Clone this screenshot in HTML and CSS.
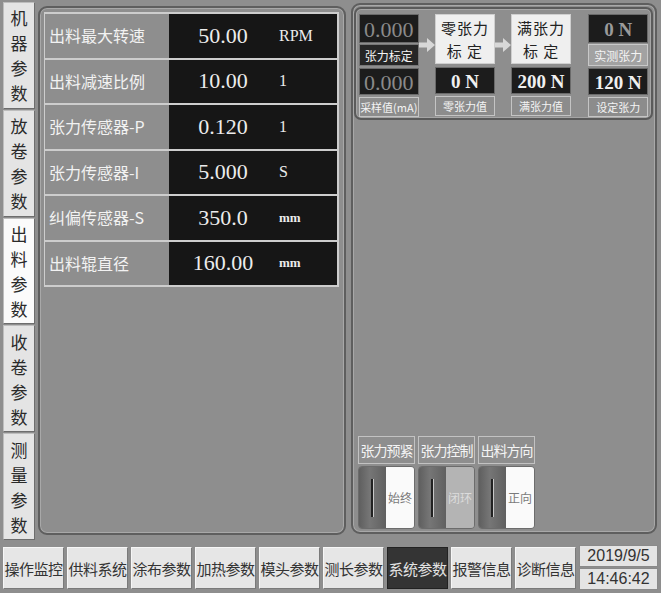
FILE: index.html
```html
<!DOCTYPE html>
<html>
<head>
<meta charset="utf-8">
<link rel="stylesheet" href="styles.css">
</head>
<body>
<div class="screen">
  <div class="main">
    <div class="tabs">
      <div class="tab"><span>机</span><span>器</span><span>参</span><span>数</span></div>
      <div class="tab"><span>放</span><span>卷</span><span>参</span><span>数</span></div>
      <div class="tab active"><span>出</span><span>料</span><span>参</span><span>数</span></div>
      <div class="tab"><span>收</span><span>卷</span><span>参</span><span>数</span></div>
      <div class="tab"><span>测</span><span>量</span><span>参</span><span>数</span></div>
    </div>

    <div class="panel left-panel">
      <div class="ptable">
        <div class="prow"><div class="plabel">出料最大转速</div><div class="pval"><span class="num">50.00</span><span class="unit">RPM</span></div></div>
        <div class="prow"><div class="plabel">出料减速比例</div><div class="pval"><span class="num">10.00</span><span class="unit">1</span></div></div>
        <div class="prow"><div class="plabel">张力传感器-P</div><div class="pval"><span class="num">0.120</span><span class="unit">1</span></div></div>
        <div class="prow"><div class="plabel">张力传感器-I</div><div class="pval"><span class="num">5.000</span><span class="unit">S</span></div></div>
        <div class="prow"><div class="plabel">纠偏传感器-S</div><div class="pval"><span class="num">350.0</span><span class="unit small">mm</span></div></div>
        <div class="prow"><div class="plabel">出料辊直径</div><div class="pval"><span class="num">160.00</span><span class="unit small">mm</span></div></div>
      </div>
    </div>

    <div class="panel right-panel">
      <div class="calib">
        <div class="ccol">
          <div class="dbox dim">0.000</div>
          <div class="lbl dark">张力标定</div>
          <div class="dbox dim">0.000</div>
          <div class="lbl">采样值(mA)</div>
        </div>
        <div class="arrow"><svg width="16" height="14" viewBox="0 0 16 14"><path d="M0 4.5H8V0L16 7L8 14V9.5H0Z" fill="#d8d8d8"/></svg></div>
        <div class="ccol">
          <div class="cbtn"><span>零张力</span><span>标 定</span></div>
          <div class="dbox">0 N</div>
          <div class="lbl">零张力值</div>
        </div>
        <div class="arrow"><svg width="16" height="14" viewBox="0 0 16 14"><path d="M0 4.5H8V0L16 7L8 14V9.5H0Z" fill="#d8d8d8"/></svg></div>
        <div class="ccol">
          <div class="cbtn"><span>满张力</span><span>标 定</span></div>
          <div class="dbox">200 N</div>
          <div class="lbl">满张力值</div>
        </div>
        <div class="gap"></div>
        <div class="ccol">
          <div class="dbox first dimb">0 N</div>
          <div class="lbl light">实测张力</div>
          <div class="dbox">120 N</div>
          <div class="lbl">设定张力</div>
        </div>
      </div>

      <div class="switches">
        <div class="sw">
          <div class="swlbl">张力预紧</div>
          <div class="swbody"><div class="knob"><i></i></div><div class="swtext">始终</div></div>
        </div>
        <div class="sw">
          <div class="swlbl">张力控制</div>
          <div class="swbody"><div class="knob"><i></i></div><div class="swtext off">闭环</div></div>
        </div>
        <div class="sw">
          <div class="swlbl">出料方向</div>
          <div class="swbody"><div class="knob"><i></i></div><div class="swtext">正向</div></div>
        </div>
      </div>
    </div>
  </div>

  <div class="nav">
    <div class="nbtn">操作监控</div>
    <div class="nbtn">供料系统</div>
    <div class="nbtn">涂布参数</div>
    <div class="nbtn">加热参数</div>
    <div class="nbtn">模头参数</div>
    <div class="nbtn">测长参数</div>
    <div class="nbtn active">系统参数</div>
    <div class="nbtn">报警信息</div>
    <div class="nbtn">诊断信息</div>
    <div class="clock">
      <div class="crow">2019/9/5</div>
      <div class="crow">14:46:42</div>
    </div>
  </div>
</div>
</body>
</html>
```

FILE: styles.css
```css
html, body {
  margin: 0;
  padding: 0;
}
body {
  width: 661px;
  height: 593px;
  background: #8e8e8e;
  font-family: "Noto Sans CJK SC", "Liberation Sans", sans-serif;
  overflow: hidden;
}
.screen {
  display: flex;
  flex-direction: column;
  height: 593px;
}
.main {
  display: flex;
  height: 543px;
  padding: 2px 4px 0 3px;
  box-sizing: border-box;
}

/* left vertical tabs */
.tabs {
  width: 32px;
  display: flex;
  flex-direction: column;
  gap: 1px;
  height: 538px;
}
.tab {
  flex: 1;
  display: flex;
  flex-direction: column;
  align-items: center;
  justify-content: center;
  background: #e4e4e4;
  border: 1px solid #bdbdbd;
  border-right-color: #6d6d6d;
  border-bottom-color: #6d6d6d;
  color: #2a2a2a;
  font-size: 17px;
  line-height: 25px;
}
.tab.active {
  background: #fbfbfb;
}

/* panels */
.panel {
  border: 2px solid #5e5e5e;
  border-radius: 9px;
  box-shadow: inset 0 0 0 1px #a8a8a8;
  box-sizing: border-box;
}
.left-panel {
  margin-left: 3px;
  margin-top: 4px;
  width: 308px;
  height: 529px;
  padding: 4px 4px 0 4px;
}
.right-panel {
  margin-left: 5px;
  margin-top: 1px;
  width: 306px;
  height: 531px;
  padding: 2px 2px 0 1px;
  display: flex;
  flex-direction: column;
}

/* parameter table */
.ptable {
  display: flex;
  flex-direction: column;
  border-top: 2px solid #cdcdcd;
  margin-right: 1px;
}
.prow {
  display: flex;
  height: 45.5px;
  border-bottom: 2px solid #cdcdcd;
  box-sizing: border-box;
}
.plabel {
  width: 125px;
  border-left: 1px solid #cdcdcd;
  color: #f2f2f2;
  font-size: 16px;
  line-height: 43px;
  padding-left: 4px;
  box-sizing: border-box;
  white-space: nowrap;
}
.pval {
  flex: 1;
  background: #161616;
  border-right: 2px solid #cdcdcd;
  display: flex;
  align-items: center;
  color: #ececec;
  font-family: "Liberation Serif", serif;
}
.num {
  width: 108px;
  text-align: center;
  font-size: 22px;
}
.unit {
  font-size: 16px;
  margin-left: 2px;
}
.unit.small {
  font-size: 13px;
  font-weight: bold;
}

/* calibration group */
.calib {
  display: flex;
  height: 113px;
  border: 2px solid #5a5a5a;
  border-radius: 7px;
  box-shadow: inset 0 0 0 1px #a5a5a5;
  box-sizing: border-box;
  padding: 5px 3px 0 3px;
}
.ccol {
  width: 61px;
  display: flex;
  flex-direction: column;
}
.arrow {
  width: 17px;
  display: flex;
  justify-content: center;
  padding-top: 24px;
  box-sizing: border-box;
}
.gap {
  width: 18px;
}
.dbox {
  background: #1c1c1c;
  color: #f0f0f0;
  font-family: "Liberation Serif", serif;
  font-weight: bold;
  font-size: 19px;
  height: 27px;
  line-height: 27px;
  text-align: center;
  border: 1px solid #6a6a6a;
  box-sizing: border-box;
  margin-bottom: 2px;
}
.dbox.first {
  height: 29px;
  line-height: 29px;
  margin-bottom: 1px;
}
.dbox.dim {
  color: #8a8a8a;
  font-weight: normal;
  font-size: 22px;
}
.ccol .dbox.dim:first-child {
  height: 29px;
  line-height: 29px;
  margin-bottom: 1px;
}
.dbox.dimb {
  color: #9a9a9a;
}
.lbl {
  height: 20px;
  line-height: 19px;
  font-size: 11px;
  color: #f4f4f4;
  text-align: center;
  border: 1px solid #c4c4c4;
  box-sizing: border-box;
  background: #8c8c8c;
  white-space: nowrap;
  margin-bottom: 2px;
}
.lbl.dark {
  background: #262626;
  border-color: #777;
  height: 22px;
  line-height: 21px;
  font-size: 12px;
}
.lbl.light {
  background: #a2a2a2;
  border-color: #c8c8c8;
  height: 22px;
  line-height: 21px;
  font-size: 12px;
}
.cbtn {
  height: 51px;
  background: #efefef;
  border: 1px solid #cfcfcf;
  box-sizing: border-box;
  display: flex;
  flex-direction: column;
  align-items: center;
  justify-content: center;
  color: #222;
  font-size: 15px;
  line-height: 23px;
  letter-spacing: 1px;
  margin-bottom: 3px;
}

/* switches */
.switches {
  margin-top: auto;
  margin-bottom: 3px;
  margin-left: 4px;
  display: flex;
  gap: 3px;
}
.sw {
  width: 57px;
  display: flex;
  flex-direction: column;
  gap: 2px;
}
.swlbl {
  height: 28px;
  line-height: 26px;
  border: 1px solid #c2c2c2;
  box-sizing: border-box;
  color: #f4f4f4;
  font-size: 14px;
  text-align: center;
  white-space: nowrap;
  letter-spacing: -1px;
}
.swbody {
  height: 61px;
  display: flex;
  border-radius: 4px;
  overflow: hidden;
  border: 1px solid #6c6c6c;
}
.knob {
  width: 27px;
  background: linear-gradient(to right, #5f5f5f, #767676 40%, #606060);
  display: flex;
  align-items: center;
  justify-content: center;
}
.knob i {
  display: block;
  width: 2px;
  height: 38px;
  background: #222;
  border-right: 1px solid #c8c8c8;
}
.swtext {
  flex: 1;
  background: #fafafa;
  color: #7a7a7a;
  font-size: 12px;
  display: flex;
  align-items: center;
  justify-content: center;
}
.swtext.off {
  background: #b4b4b4;
  color: #dcdcdc;
}

/* bottom nav */
.nav {
  display: flex;
  gap: 3px;
  padding: 2px 3px 0 3px;
  height: 48px;
  box-sizing: border-box;
}
.nbtn {
  width: 61px;
  height: 42px;
  margin-top: 2px;
  background: #e6e6e6;
  border: 1px solid #f6f6f6;
  border-right-color: #7a7a7a;
  border-bottom-color: #7a7a7a;
  box-sizing: border-box;
  color: #333;
  font-size: 15px;
  letter-spacing: -0.5px;
  display: flex;
  align-items: center;
  justify-content: center;
  white-space: nowrap;
}
.nbtn.active {
  background: #343434;
  color: #e2e2e2;
  border-color: #222;
}
.clock {
  width: 79px;
  display: flex;
  flex-direction: column;
  gap: 1px;
}
.crow {
  height: 22px;
  background: #e4e4e4;
  border: 1px solid #8a8a8a;
  box-sizing: border-box;
  color: #333;
  font-family: "Liberation Sans", sans-serif;
  font-size: 16px;
  line-height: 20px;
  text-align: center;
}
```
